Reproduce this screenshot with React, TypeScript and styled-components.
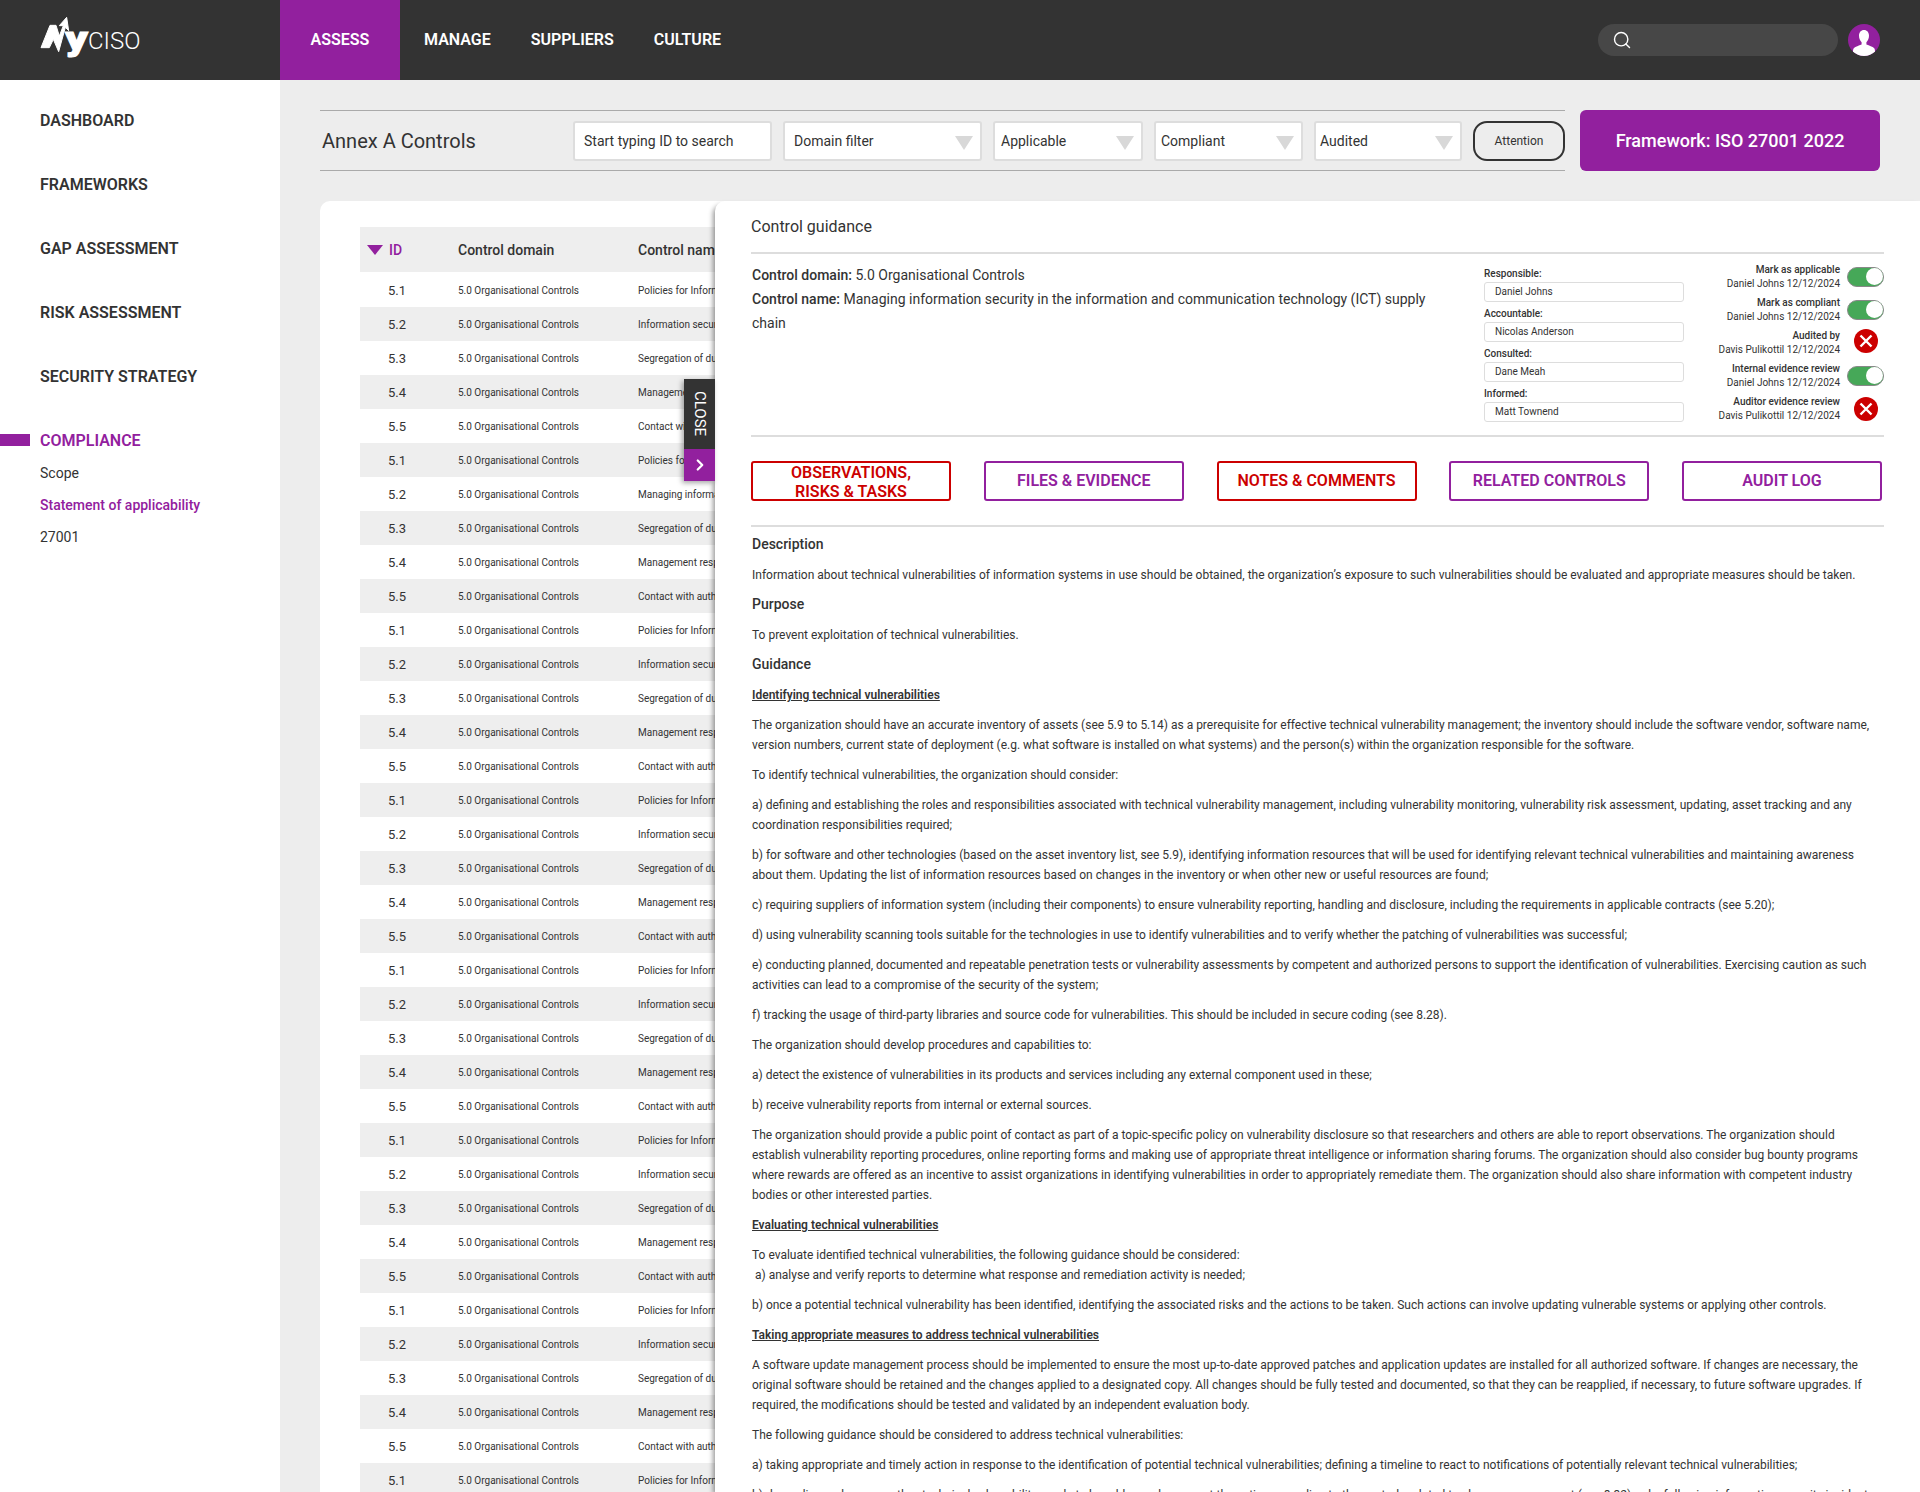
import React from "react";
import styled, { createGlobalStyle } from "styled-components";
import { Search, ChevronRight } from "lucide-react";

const purple = "#92209e";
const red = "#cc0000";
const ink = "#333333";

const GlobalStyle = createGlobalStyle`
    html, body {
        margin: 0;
        padding: 0;
        background: #ededed;
    }
    body {
        font-family: Roboto, "Liberation Sans", sans-serif;
        color: ${ink};
    }
    * {
        box-sizing: border-box;
    }
`;

const Page = styled.div`
    width: 1920px;
    height: 1492px;
    overflow: hidden;
    display: flex;
    flex-direction: column;
`;

const Header = styled.header`
    height: 80px;
    flex: none;
    background: ${ink};
    display: flex;
    align-items: stretch;
`;

const LogoBox = styled.div`
    width: 280px;
    flex: none;
    padding: 10px 0 0 30px;
`;

const ActiveTab = styled.a`
    width: 120px;
    display: flex;
    align-items: center;
    justify-content: center;
    padding-bottom: 2px;
    background: ${purple};
    color: #fff;
    font-size: 16px;
    font-weight: 600;
`;

const NavLinks = styled.div`
    display: flex;
    align-items: center;
    gap: 40px;
    margin-left: 24px;
    padding-bottom: 2px;
    color: #fff;
    font-size: 16px;
    font-weight: 600;
`;

const HeaderRight = styled.div`
    margin-left: auto;
    padding-right: 40px;
    display: flex;
    align-items: center;
    gap: 10px;
`;

const SearchPill = styled.div`
    width: 240px;
    height: 32px;
    border-radius: 16px;
    background: #474747;
    display: flex;
    align-items: center;
    padding-left: 14px;
    color: #fff;
`;

const Avatar = styled.div`
    width: 32px;
    height: 32px;
    border-radius: 50%;
    overflow: hidden;
    background: ${purple};
`;

const Body = styled.div`
    flex: 1;
    display: flex;
    min-height: 0;
`;

const Sidebar = styled.nav`
    width: 280px;
    flex: none;
    background: #fff;
    padding: 31px 0 0 40px;
`;

const SideItem = styled.div<{ $active?: boolean }>`
    position: relative;
    height: 20px;
    line-height: 20px;
    margin-bottom: 44px;
    font-size: 16px;
    font-weight: 600;
    color: ${(p) => (p.$active ? purple : ink)};

    ${(p) =>
        p.$active &&
        `
        margin-bottom: 12px;
        &::before {
            content: "";
            position: absolute;
            left: -40px;
            top: 3px;
            width: 30px;
            height: 12px;
            background: ${purple};
        }
    `}
`;

const SubItem = styled.div<{ $active?: boolean }>`
    height: 20px;
    line-height: 20px;
    margin-bottom: 12px;
    font-size: 14px;
    font-weight: ${(p) => (p.$active ? 500 : 400)};
    color: ${(p) => (p.$active ? purple : ink)};
`;

const Main = styled.main`
    flex: 1;
    min-width: 0;
    padding: 30px 0 0 40px;
    display: flex;
    flex-direction: column;
`;

const TopRow = styled.div`
    display: flex;
    gap: 15px;
    padding-right: 40px;
    margin-bottom: 30px;
`;

const Toolbar = styled.div`
    flex: 1;
    height: 61px;
    border-top: 1px solid #aaa;
    border-bottom: 1px solid #aaa;
    display: flex;
    align-items: center;
    padding-left: 2px;
`;

const Title = styled.h1`
    width: 251px;
    margin: 0;
    font-size: 20px;
    font-weight: 400;
`;

const Field = styled.div<{ $width: number; $pad: number }>`
    position: relative;
    width: ${(p) => p.$width}px;
    height: 40px;
    margin-right: 11px;
    background: #fff;
    border: 2px solid #ddd;
    border-radius: 3px;
    padding-left: ${(p) => p.$pad}px;
    font-size: 14px;
    line-height: 36px;

    &[data-arrow]::after {
        content: "";
        position: absolute;
        right: 7px;
        top: 13px;
        border-left: 9px solid transparent;
        border-right: 9px solid transparent;
        border-top: 14px solid #d8d8d8;
    }
`;

const AttentionButton = styled.button`
    width: 92px;
    height: 40px;
    background: transparent;
    border: 2px solid ${ink};
    border-radius: 14px;
    font-family: inherit;
    font-size: 12px;
    color: ${ink};
`;

const FrameworkButton = styled.button`
    width: 300px;
    height: 61px;
    border: 0;
    border-radius: 6px;
    background: ${purple};
    color: #fff;
    font-family: inherit;
    font-size: 18px;
    font-weight: 500;
`;

const Card = styled.section`
    flex: 1;
    min-height: 0;
    display: flex;
    background: #fff;
    border-top-left-radius: 10px;
`;

const TableArea = styled.div`
    width: 395px;
    flex: none;
    padding: 26px 0 0 40px;
    overflow: hidden;
`;

const HeadRow = styled.div`
    height: 45px;
    display: grid;
    grid-template-columns: 98px 180px 1fr;
    align-items: center;
    background: #eee;
    font-size: 14px;
    font-weight: 500;
    white-space: nowrap;
`;

const SortCell = styled.div`
    display: flex;
    align-items: center;
    gap: 6px;
    padding-left: 7px;
    color: ${purple};

    &::before {
        content: "";
        border-left: 8px solid transparent;
        border-right: 8px solid transparent;
        border-top: 10px solid ${purple};
    }
`;

const Row = styled.div`
    height: 34px;
    display: grid;
    grid-template-columns: 98px 180px 1fr;
    align-items: center;
    font-size: 10px;
    white-space: nowrap;

    &:nth-child(even) {
        background: #eee;
    }
    &:first-child {
        height: 35px;
        padding-top: 1px;
    }
`;

const IdCell = styled.div`
    padding-left: 28px;
    font-size: 13px;
`;

const Panel = styled.div`
    position: relative;
    flex: 1;
    min-width: 0;
    background: #fff;
    border-top-left-radius: 10px;
    box-shadow: -3px 3px 5px -1px rgba(0, 0, 0, 0.4);
    padding: 0 36px 0 36px;
`;

const CloseTab = styled.div`
    position: absolute;
    left: -31px;
    top: 178px;
    width: 31px;
    box-shadow: -2px 2px 5px rgba(0, 0, 0, 0.35);
`;

const CloseLabel = styled.div`
    width: 100%;
    height: 70px;
    background: ${ink};
    color: #fff;
    font-size: 15px;
    writing-mode: vertical-rl;
    display: flex;
    align-items: center;
    justify-content: center;
`;

const CloseArrow = styled.div`
    height: 32px;
    background: ${purple};
    color: #fff;
    display: flex;
    align-items: center;
    justify-content: center;
`;

const PanelTitle = styled.h2`
    height: 53px;
    margin: 0;
    border-bottom: 2px solid #ddd;
    font-size: 16px;
    font-weight: 400;
    line-height: 51px;
`;

const Meta = styled.div`
    height: 183px;
    display: flex;
    border-bottom: 2px solid #ddd;
`;

const MetaText = styled.div`
    width: 689px;
    margin: 0 43px 0 1px;
    padding-top: 9px;
    font-size: 14px;
    line-height: 24px;

    b {
        font-weight: 500;
    }
`;

const People = styled.div`
    width: 200px;
    flex: none;
    padding-top: 13px;
`;

const Person = styled.div`
    margin-bottom: 5px;
`;

const PersonLabel = styled.div`
    height: 15px;
    font-size: 10px;
    font-weight: 500;
    line-height: 14px;
`;

const PersonValue = styled.div`
    height: 20px;
    border: 1px solid #ddd;
    border-radius: 3px;
    padding-left: 10px;
    font-size: 10px;
    line-height: 18px;
`;

const StatusList = styled.div`
    flex: 1;
    padding-top: 9px;
    display: flex;
    flex-direction: column;
    gap: 5px;
`;

const StatusRow = styled.div`
    height: 28px;
    display: flex;
    align-items: center;
    justify-content: flex-end;
    gap: 7px;
`;

const StatusText = styled.div`
    text-align: right;
    font-size: 10px;
    line-height: 14px;

    b {
        font-weight: 500;
        display: block;
    }
`;

const Toggle = styled.div`
    position: relative;
    width: 37px;
    height: 20px;
    border-radius: 10px;
    background: #46a858;
    border: 1.5px solid #888;

    &::after {
        content: "";
        position: absolute;
        right: 0;
        top: 0;
        width: 17px;
        height: 17px;
        border-radius: 50%;
        background: #fff;
    }
`;

const CrossSlot = styled.div<{ $lift: number }>`
    width: 37px;
    margin-bottom: ${(p) => p.$lift}px;
    display: flex;
    justify-content: center;
`;

const Tabs = styled.div`
    height: 90px;
    display: flex;
    align-items: center;
    justify-content: space-between;
    padding-right: 2px;
    border-bottom: 2px solid #ddd;
`;

const TabButton = styled.button<{ $red?: boolean }>`
    width: 200px;
    height: 40px;
    padding: 0 0 2px;
    background: #fff;
    border: 2px solid ${(p) => (p.$red ? red : purple)};
    border-radius: 3px;
    color: ${(p) => (p.$red ? red : purple)};
    font-family: inherit;
    font-size: 16px;
    font-weight: 600;
    line-height: 19px;
`;

const Guidance = styled.div`
    padding: 7px 0 0 1px;
    font-size: 12px;
    line-height: 20px;

    p {
        margin: 0 0 9px;
        padding-top: 1px;
    }
`;

const SectionHeading = styled.h3`
    margin: 0 0 10px;
    font-size: 14px;
    font-weight: 500;
    line-height: 20px;
`;

const Subheading = styled.p`
    font-weight: 600;
    text-decoration: underline;
`;

const rowNames = [
    "Policies for Information security",
    "Information security roles and responsibilities",
    "Segregation of duties",
    "Management responsibilities",
    "Contact with authorities",
];

const rows = Array.from({ length: 36 }, (_, i) => ({
    id: `5.${(i % 5) + 1}`,
    name: i === 6 ? "Managing information security" : rowNames[i % 5],
}));

const people = [
    ["Responsible:", "Daniel Johns"],
    ["Accountable:", "Nicolas Anderson"],
    ["Consulted:", "Dane Meah"],
    ["Informed:", "Matt Townend"],
];

const statuses = [
    { label: "Mark as applicable", by: "Daniel Johns 12/12/2024", on: true, lift: 0 },
    { label: "Mark as compliant", by: "Daniel Johns 12/12/2024", on: true, lift: 0 },
    { label: "Audited by", by: "Davis Pulikottil 12/12/2024", on: false, lift: 4 },
    { label: "Internal evidence review", by: "Daniel Johns 12/12/2024", on: true, lift: 0 },
    { label: "Auditor evidence review", by: "Davis Pulikottil 12/12/2024", on: false, lift: 0 },
];

const filters = [
    { label: "Domain filter", width: 199, pad: 9 },
    { label: "Applicable", width: 150, pad: 6 },
    { label: "Compliant", width: 149, pad: 5 },
    { label: "Audited", width: 148, pad: 4 },
];

const Logo = () => (
    <svg width="120" height="60" viewBox="0 0 360 180">
        <polygon
            fill="#fff"
            stroke="#fff"
            strokeWidth="3"
            points="33,113 60,46 78,46 88,78 100,47 88,47 110,22 116,62 106,52 86,125 70,88 58,113"
        />
        <text
            x="106"
            y="120"
            fill="#fff"
            stroke="#fff"
            strokeWidth="3"
            fontFamily="Roboto"
            fontWeight="900"
            fontSize="100"
            textLength="68"
            lengthAdjust="spacingAndGlyphs"
        >
            y
        </text>
        <text x="174" y="117" fill="#fff" fontFamily="Roboto" fontWeight="300" fontSize="72">
            CISO
        </text>
    </svg>
);

const CrossIcon = () => (
    <svg width="24" height="24" viewBox="0 0 24 24">
        <circle cx="12" cy="12" r="12" fill={red} />
        <path d="M6.5 6.5 17.5 17.5M17.5 6.5 6.5 17.5" stroke="#fff" strokeWidth="2.4" />
    </svg>
);

const AvatarIcon = () => (
    <svg width="32" height="32" viewBox="0 0 32 32">
        <path
            fill="#fff"
            d="M16 6c3 0 5 2.300 5 5.800 0 2.700-1.200 5.200-2.600 6.400v2.300c2.800 1.200 6.200 2 7.600 3.500.9 1 1 2.500 1 3.500v5H5v-5c0-1 .1-2.500 1-3.500 1.400-1.500 4.800-2.300 7.600-3.500v-2.300C12.200 17 11 14.500 11 11.800 11 8.300 13 6 16 6Z"
        />
    </svg>
);

export default function App() {
    return (
        <Page>
            <GlobalStyle />
            <Header>
                <LogoBox>
                    <Logo />
                </LogoBox>
                <ActiveTab>ASSESS</ActiveTab>
                <NavLinks>
                    <a>MANAGE</a>
                    <a>SUPPLIERS</a>
                    <a>CULTURE</a>
                </NavLinks>
                <HeaderRight>
                    <SearchPill>
                        <Search size={20} strokeWidth={1.7} />
                    </SearchPill>
                    <Avatar>
                        <AvatarIcon />
                    </Avatar>
                </HeaderRight>
            </Header>
            <Body>
                <Sidebar>
                    <SideItem>DASHBOARD</SideItem>
                    <SideItem>FRAMEWORKS</SideItem>
                    <SideItem>GAP ASSESSMENT</SideItem>
                    <SideItem>RISK ASSESSMENT</SideItem>
                    <SideItem>SECURITY STRATEGY</SideItem>
                    <SideItem $active>COMPLIANCE</SideItem>
                    <SubItem>Scope</SubItem>
                    <SubItem $active>Statement of applicability</SubItem>
                    <SubItem>27001</SubItem>
                </Sidebar>
                <Main>
                    <TopRow>
                        <Toolbar>
                            <Title>Annex A Controls</Title>
                            <Field $width={199} $pad={9}>
                                Start typing ID to search
                            </Field>
                            {filters.map((f) => (
                                <Field key={f.label} $width={f.width} $pad={f.pad} data-arrow>
                                    {f.label}
                                </Field>
                            ))}
                            <AttentionButton>Attention</AttentionButton>
                        </Toolbar>
                        <FrameworkButton>Framework: ISO 27001 2022</FrameworkButton>
                    </TopRow>
                    <Card>
                        <TableArea>
                            <HeadRow>
                                <SortCell>ID</SortCell>
                                <div>Control domain</div>
                                <div>Control name</div>
                            </HeadRow>
                            <div>
                                {rows.map((row, i) => (
                                    <Row key={i}>
                                        <IdCell>{row.id}</IdCell>
                                        <div>5.0 Organisational Controls</div>
                                        <div>{row.name}</div>
                                    </Row>
                                ))}
                            </div>
                        </TableArea>
                        <Panel>
                            <CloseTab>
                                <CloseLabel>CLOSE</CloseLabel>
                                <CloseArrow>
                                    <ChevronRight size={18} strokeWidth={3} />
                                </CloseArrow>
                            </CloseTab>
                            <PanelTitle>Control guidance</PanelTitle>
                            <Meta>
                                <MetaText>
                                    <div>
                                        <b>Control domain:</b> 5.0 Organisational Controls
                                    </div>
                                    <div>
                                        <b>Control name:</b> Managing information security in the
                                        information and communication technology (ICT) supply chain
                                    </div>
                                </MetaText>
                                <People>
                                    {people.map(([label, value]) => (
                                        <Person key={label}>
                                            <PersonLabel>{label}</PersonLabel>
                                            <PersonValue>{value}</PersonValue>
                                        </Person>
                                    ))}
                                </People>
                                <StatusList>
                                    {statuses.map((s) => (
                                        <StatusRow key={s.label}>
                                            <StatusText>
                                                <b>{s.label}</b>
                                                {s.by}
                                            </StatusText>
                                            {s.on ? (
                                                <Toggle />
                                            ) : (
                                                <CrossSlot $lift={s.lift}>
                                                    <CrossIcon />
                                                </CrossSlot>
                                            )}
                                        </StatusRow>
                                    ))}
                                </StatusList>
                            </Meta>
                            <Tabs>
                                <TabButton $red>
                                    OBSERVATIONS,
                                    <br />
                                    RISKS &amp; TASKS
                                </TabButton>
                                <TabButton>FILES &amp; EVIDENCE</TabButton>
                                <TabButton $red>NOTES &amp; COMMENTS</TabButton>
                                <TabButton>RELATED CONTROLS</TabButton>
                                <TabButton>AUDIT LOG</TabButton>
                            </Tabs>
                            <Guidance>
                                <SectionHeading>Description</SectionHeading>
                                <p>
                                    Information about technical vulnerabilities of information systems in use should be obtained, the organization’s exposure to such vulnerabilities should be evaluated and appropriate measures should be taken.
                                </p>
                                <SectionHeading>Purpose</SectionHeading>
                                <p>To prevent exploitation of technical vulnerabilities.</p>
                                <SectionHeading>Guidance</SectionHeading>
                                <Subheading>Identifying technical vulnerabilities</Subheading>
                                <p>
                                    The organization should have an accurate inventory of assets (see 5.9 to 5.14) as a prerequisite for effective technical vulnerability management; the inventory should include the software vendor, software name, version numbers, current state of deployment (e.g. what software is installed on what systems) and the person(s) within the organization responsible for the software.
                                </p>
                                <p>To identify technical vulnerabilities, the organization should consider:</p>
                                <p>
                                    a) defining and establishing the roles and responsibilities associated with technical vulnerability management, including vulnerability monitoring, vulnerability risk assessment, updating, asset tracking and any coordination responsibilities required;
                                </p>
                                <p>
                                    b) for software and other technologies (based on the asset inventory list, see 5.9), identifying information resources that will be used for identifying relevant technical vulnerabilities and maintaining awareness about them. Updating the list of information resources based on changes in the inventory or when other new or useful resources are found;
                                </p>
                                <p>
                                    c) requiring suppliers of information system (including their components) to ensure vulnerability reporting, handling and disclosure, including the requirements in applicable contracts (see 5.20);
                                </p>
                                <p>
                                    d) using vulnerability scanning tools suitable for the technologies in use to identify vulnerabilities and to verify whether the patching of vulnerabilities was successful;
                                </p>
                                <p>
                                    e) conducting planned, documented and repeatable penetration tests or vulnerability assessments by competent and authorized persons to support the identification of vulnerabilities. Exercising caution as such activities can lead to a compromise of the security of the system;
                                </p>
                                <p>
                                    f) tracking the usage of third-party libraries and source code for vulnerabilities. This should be included in secure coding (see 8.28).
                                </p>
                                <p>The organization should develop procedures and capabilities to:</p>
                                <p>a) detect the existence of vulnerabilities in its products and services including any external component used in these;</p>
                                <p>b) receive vulnerability reports from internal or external sources.</p>
                                <p>
                                    The organization should provide a public point of contact as part of a topic-specific policy on vulnerability disclosure so that researchers and others are able to report observations. The organization should establish vulnerability reporting procedures, online reporting forms and making use of appropriate threat intelligence or information sharing forums. The organization should also consider bug bounty programs where rewards are offered as an incentive to assist organizations in identifying vulnerabilities in order to appropriately remediate them. The organization should also share information with competent industry bodies or other interested parties.
                                </p>
                                <Subheading>Evaluating technical vulnerabilities</Subheading>
                                <p>
                                    To evaluate identified technical vulnerabilities, the following guidance should be considered:
                                    <br />
                                    &nbsp;a) analyse and verify reports to determine what response and remediation activity is needed;
                                </p>
                                <p>
                                    b) once a potential technical vulnerability has been identified, identifying the associated risks and the actions to be taken. Such actions can involve updating vulnerable systems or applying other controls.
                                </p>
                                <Subheading>Taking appropriate measures to address technical vulnerabilities</Subheading>
                                <p>
                                    A software update management process should be implemented to ensure the most up-to-date approved patches and application updates are installed for all authorized software. If changes are necessary, the original software should be retained and the changes applied to a designated copy. All changes should be fully tested and documented, so that they can be reapplied, if necessary, to future software upgrades. If required, the modifications should be tested and validated by an independent evaluation body.
                                </p>
                                <p>The following guidance should be considered to address technical vulnerabilities:</p>
                                <p>
                                    a) taking appropriate and timely action in response to the identification of potential technical vulnerabilities; defining a timeline to react to notifications of potentially relevant technical vulnerabilities;
                                </p>
                                <p>
                                    b) depending on how urgently a technical vulnerability needs to be addressed, carry out the action according to the controls related to change management (see 8.32) or by following information security incident management procedures (see 5.26);
                                </p>
                            </Guidance>
                        </Panel>
                    </Card>
                </Main>
            </Body>
        </Page>
    );
}
